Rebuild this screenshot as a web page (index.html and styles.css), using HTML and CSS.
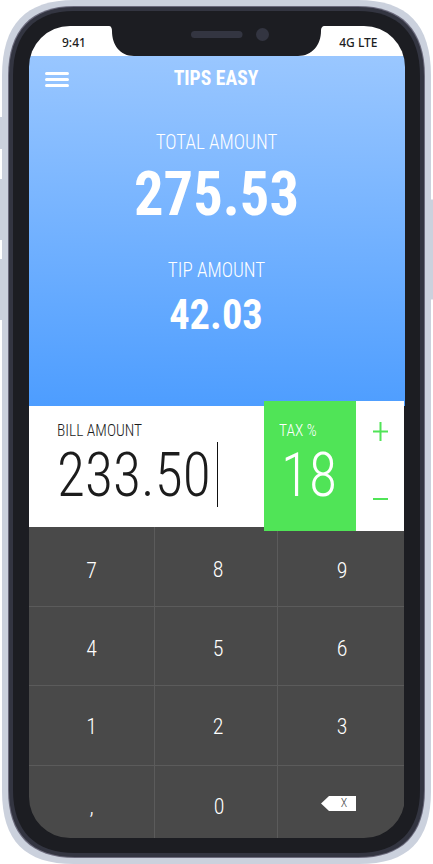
FILE: index.html
```html
<!DOCTYPE html>
<html lang="en">
<head>
<meta charset="utf-8">
<title>Tips Easy</title>
<link rel="stylesheet" href="styles.css">
</head>
<body>
<div class="phone">
  <svg class="frame" width="433" height="864" viewBox="0 0 433 864" aria-hidden="true">
    <g fill="#cbd1dd">
      <rect x="-4" y="117" width="10" height="32" rx="2"/>
      <rect x="-4" y="179" width="10" height="61" rx="2"/>
      <rect x="-4" y="259" width="10" height="61" rx="2"/>
      <rect x="428" y="199.500" width="10" height="100" rx="2"/>
      <path d="M74 0H358C407 0 431 24 431 76V791C431 841 408 864 359 864H74C25 864 2 841 2 791V76C2 24 26 0 74 0Z"/>
    </g>
    <path fill="#6b6a7c" d="M74 6H358C402 6 425 30 425 76V790C425 835 402 858 358 858H75C31 858 8 835 8 790V76C8 30 31 6 74 6Z"/>
    <path fill="#333541" d="M74 7H358C401 7 424 31 424 76V790C424 834 402 857 358 857H75C32 857 9 834 9 790V76C9 31 32 7 74 7Z"/>
    <path fill="#1c1d22" d="M74 11H358C398 11 420 33 420 76V790C420 831 398 853 358 853H75C35 853 13 831 13 790V76C13 33 35 11 74 11Z"/>
  </svg>
  <main class="screen">
    <header class="status"><span class="time">9:41</span><span class="net">4G LTE</span></header>
    <section class="summary">
      <nav class="bar">
        <svg class="menu" width="24" height="15" viewBox="0 0 24 15"><path fill="none" stroke="#fff" stroke-width="3" stroke-linecap="round" d="M1.5 1.5H22.5M1.5 7.5H22.5M1.5 13.5H22.5"/></svg>
        <h1 class="title">TIPS EASY</h1>
      </nav>
      <p class="label total-label">TOTAL AMOUNT</p>
      <p class="total">275.53</p>
      <p class="label tip-label">TIP AMOUNT</p>
      <p class="tip">42.03</p>
    </section>
    <section class="entry">
      <div class="bill">
        <p class="small">BILL AMOUNT</p>
        <div class="value"><span class="amount">233.50</span><i class="caret"></i></div>
      </div>
      <div class="tax">
        <p class="small">TAX %</p>
        <p class="amount percent">18</p>
      </div>
      <div class="stepper">
        <svg width="16" height="100" viewBox="0 0 16 100"><path fill="none" stroke="#50e457" stroke-width="2" d="M1 11.500H16M8.500 2V21M1 79H16"/></svg>
      </div>
    </section>
    <section class="keys">
      <button class="key">7</button><button class="key mid up">8</button><button class="key right">9</button>
      <button class="key row2">4</button><button class="key mid row2">5</button><button class="key right row2">6</button>
      <button class="key row3">1</button><button class="key mid row3">2</button><button class="key right row3">3</button>
      <button class="key">,</button><button class="key zero">0</button>
      <button class="key back"><span class="erase">X</span></button>
    </section>
  </main>
  <svg class="notch" width="216" height="32" viewBox="0 0 216 32" aria-hidden="true">
    <path fill="#1c1d22" d="M0 0V2C2 2 3 4 3 7C3 21 11 32 25 32H189C203 32 212 21 212 7C212 4 213 2 216 2V0Z"/>
    <rect x="82" y="7" width="51.500" height="7" rx="3.500" fill="#333541"/>
    <circle cx="153.500" cy="10.500" r="6.500" fill="#333541"/>
  </svg>
</div>
</body>
</html>
```
FILE: styles.css
```css
* { box-sizing: border-box; margin: 0; padding: 0; }
body { background: #fff; overflow: hidden; }
.phone {
  position: relative;
  width: 433px;
  height: 864px;
  padding: 26px 28px 26px 29px;
  overflow: hidden;
  font-family: "Roboto Condensed", Roboto, sans-serif;
  font-stretch: 75%;
  color: #fff;
}
.frame { position: absolute; left: 0; top: 0; }
.notch { position: absolute; left: 109px; top: 24px; }
.screen {
  position: relative;
  width: 376px;
  height: 812px;
  border-radius: 41px;
  overflow: hidden;
  background: #1c1d22;
}
.status {
  display: flex;
  justify-content: space-between;
  height: 30px;
  width: 375px;
  padding: 8px 26.500px 0 33px;
  background: #fff;
  color: #1c1d22;
  font: 550 12px/17px "Noto Sans", sans-serif;
}
.summary { height: 350px; background: linear-gradient(181deg, #9ac7ff, #4d9dff); text-align: center; }
.bar { display: flex; height: 44px; padding: 16px 0 0 16px; }
.title { width: 294px; margin-top: -6px; font-size: 20px; line-height: 24px; font-weight: 700; transform: scaleX(0.98); }
.label { margin-right: 1px; font-size: 20px; line-height: 24px; font-weight: 300; transform: scaleX(0.953); }
.total-label { margin-top: 30px; }
.total { margin: 4px 1px 0 0; font-size: 61px; line-height: 72px; font-weight: 700; transform: scaleX(0.96); }
.tip-label { margin-top: 28px; }
.tip { margin: 8px 2px 0 0; font-size: 42px; line-height: 50px; font-weight: 700; transform: scaleX(0.965); }
.entry {
  position: relative;
  display: grid;
  grid-template-columns: 235px 92px 48px;
  height: 130px;
  width: 375px;
  margin: -5px 0 -4px;
  z-index: 1;
}
.bill { height: 121px; margin-top: 5px; padding: 15px 0 0 28px; background: #fff; color: #1c1c1c; }
.value { display: flex; height: 70px; }
.small { font-size: 16px; line-height: 20px; font-weight: 300; transform: scaleX(0.965); transform-origin: left; }
.amount { margin-top: -1px; font-size: 61px; line-height: 70px; font-weight: 300; transform: scaleX(0.943); transform-origin: left; }
.caret { width: 1px; height: 65px; margin: 1px 0 0 -3px; background: #111; }
.tax { padding: 20px 0 0 15px; background: #50e457; }
.percent { margin-left: 2px; }
.stepper { padding: 19px 0 0 16px; background: #fff; }
.keys {
  display: grid;
  grid-template-columns: 126px 123px 126px;
  grid-template-rows: 80px 79px 80px 72px;
  width: 375px;
  background: #494949;
}
.key {
  border: 0 solid #5b5b5b;
  border-width: 0 1px 1px 0;
  background: none;
  padding-top: 9px;
  color: #fff;
  font: inherit;
  font-size: 22px;
  font-weight: 300;
  line-height: 26px;
}
.key:nth-child(3n) { border-right: 0; }
.key:nth-child(n+10) { border-bottom: 0; }
.mid { padding-left: 4px; }
.right { padding-left: 2px; }
.zero { padding-left: 6px; }
.up { padding-top: 7px; }
.row2 { padding-top: 5px; }
.row3 { padding-top: 3px; }
.back { display: flex; align-items: flex-start; padding: 30px 0 0 43px; }
.erase {
  width: 35px;
  height: 15px;
  padding-left: 11px;
  background: #fff;
  clip-path: polygon(8px 0, 100% 0, 100% 100%, 8px 100%, 0 50%);
  color: #494949;
  font-size: 12px;
  line-height: 15px;
}
```
